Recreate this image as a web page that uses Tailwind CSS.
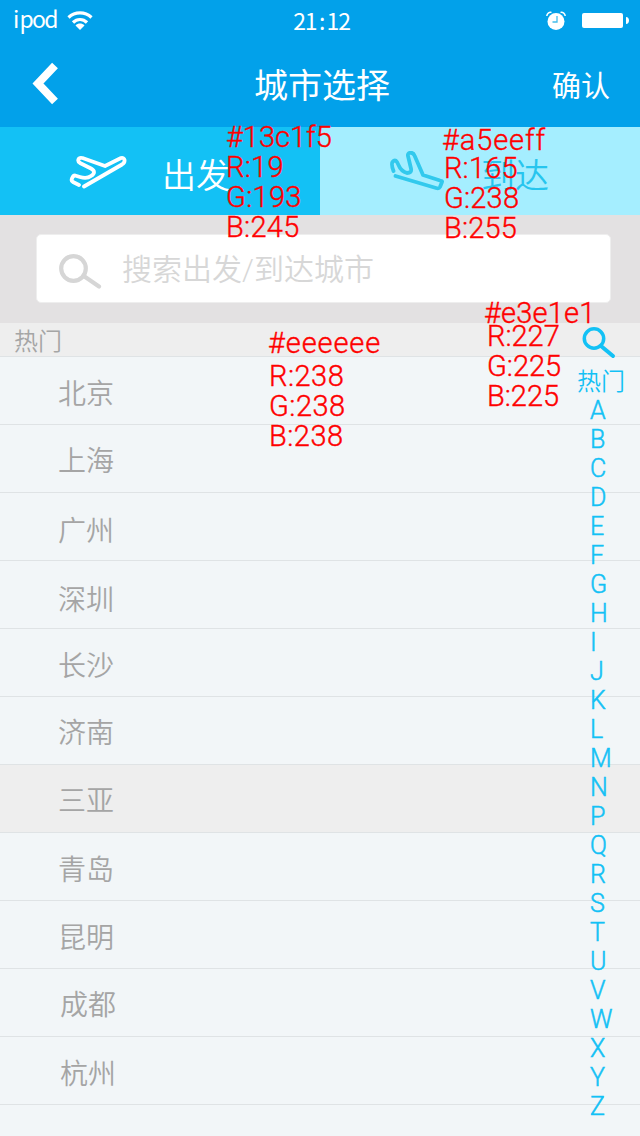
<!DOCTYPE html>
<html lang="zh-CN">
<head>
<meta charset="utf-8">
<title>城市选择</title>
<script src="https://cdn.jsdelivr.net/npm/@tailwindcss/browser@4"></script>
</head>
<body class="relative h-[1136px] w-[640px] overflow-hidden bg-[#f2f6f8] font-['Roboto','Noto_Sans_CJK_SC',sans-serif] font-[350]">

<header class="flex h-[127px] flex-col bg-[#02a1ea] text-white">
  <div class="grid h-10 grid-cols-3 items-center pl-[13px] pr-[11px]">
    <div class="flex items-center gap-[13px]">
      <span class="-mt-1 w-[41px] whitespace-nowrap text-[23px] leading-10 font-normal tracking-[-1.8px] font-['Noto_Sans_CJK_SC',sans-serif]"><span class="mr-0.5">i</span>pod</span>
      <svg class="h-[19px] w-[26px]" viewBox="0 0 26 19" fill="none" stroke="currentColor" stroke-width="3.2"><path d="M1.500 6.500C8 .4 18 .4 24.500 6.500M6 11.500c4-4 10-4 14 0"/><path d="M8.500 14.500c2.500-2.600 6.500-2.600 9 0L13 19z" fill="currentColor" stroke="none"/></svg>
    </div>
    <div class="pl-px text-center text-[23px] font-normal leading-10 tracking-[-1.2px] font-['Noto_Sans_CJK_SC',sans-serif]">21<span class="mx-[2.5px]">:</span>12</div>
    <div class="flex items-center justify-end gap-4">
      <svg class="h-[19px] w-5" viewBox="0 0 20 19" fill="none"><circle cx="10" cy="10.500" r="8.500" fill="#fff"/><path d="M.8 5C1 2.300 3 1 5.500 1.400M19.200 5C19 2.300 17 1 14.500 1.400" stroke="#fff" stroke-width="1.500"/><path d="M11 5v6H6.500" stroke="#44bdeb" stroke-width="1.300"/></svg>
      <svg class="h-[15px] w-[47px]" viewBox="0 0 47 15" fill="#fff"><rect width="41" height="15" rx="2"/><path d="M44 4c4 0 4 7 0 7z"/></svg>
    </div>
  </div>
  <div class="flex h-[87px] items-center justify-between pl-8 pr-[30px] pt-1 font-normal">
    <svg class="-mt-1 h-[43px] w-[27px]" viewBox="0 0 27 43" fill="none" stroke="currentColor" stroke-width="8"><path d="M23 3.500 6 21.500 23 39.500"/></svg>
    <h1 class="ml-[33px] pt-0.5 text-[34px]">城市选择</h1>
    <button class="pt-1 text-[29px] font-normal">确认</button>
  </div>
</header>

<nav class="grid h-[88px] grid-cols-2 text-[34px]">
  <div class="flex items-center gap-[35px] bg-[#13c1f5] pl-[69px] text-white">
    <svg class="h-9 w-[58px]" viewBox="0 0 58 36" fill="none" stroke="currentColor" stroke-width="3.800" stroke-linecap="round" stroke-linejoin="round"><path d="M15 33.500 53 11.500C57 9 56 4 52 5L36 13 13.500 5C9 4 8 8 11 10L22 15.500Q28 19 22 23 18 26 11 24L6 22.500Q4 22.500 3 25.500 2 28 4 29L10 32"/></svg>
    <span class="mt-2.5">出发</span>
  </div>
  <div class="flex items-center gap-[36px] bg-[#a5eeff] pl-[69px] text-[#27c5ee]">
    <svg class="h-10 w-14 shrink-0" viewBox="0 0 56 40" fill="none" stroke="#32c9ed" stroke-width="3.800" stroke-linecap="round" stroke-linejoin="round"><path d="M6.500 25 47 37Q50 38 51 36L53 31Q53.500 30 51 29.500L34 24 25.500 4.500C24 .5 18 1 19 5L22 17.500Q23 22 18 22 12 20 10 15L8 11Q6 8 3.500 11 2 13 4.500 20"/></svg>
    <span class="mt-2.5">到达</span>
  </div>
</nav>

<div class="h-[108px] bg-[#e3e1e2] pl-[36px] pr-[29px] pt-[19px]">
  <div class="flex h-[69px] items-center gap-[19px] rounded-[5px] border border-[#eeeeee] bg-white pl-[21px] text-[30px] text-[#d7d7d7]">
    <svg class="mt-1 h-9 w-[45px]" viewBox="0 0 45 36" fill="none" stroke="#d6d6d6" stroke-width="4.200" stroke-linecap="round"><circle cx="15.500" cy="15.500" r="12.300"/><path d="m26.500 23.500 14.500 10"/></svg>
    <span class="whitespace-nowrap pt-0.5">搜索出发/到达城市</span>
  </div>
</div>

<main class="text-[28px] text-[#a5a5a5]">
  <h2 class="h-[34px] border-b border-[#dfe3e5] bg-[#eeeeee] pl-[14px] pt-0.5 text-2xl leading-[34px] font-[350]">热门</h2>
  <ul class="leading-[68px] [&>li]:h-[68px] [&>li]:border-b [&>li]:border-[#dfe3e5] [&>li]:pl-[58px]">
    <li class="pt-1">北京</li><li class="pt-[3px]">上海</li><li class="pt-[5px]">广州</li><li class="pt-1.5">深圳</li><li class="pt-1">长沙</li><li class="pt-[3px]">济南</li><li class="bg-[#eeeeee] pt-[3px]">三亚</li><li class="pt-1">青岛</li><li class="pt-1">昆明</li><li class="pt-[3px]"><span class="ml-0.5">成都</span></li><li class="pt-1"><span class="ml-0.5">杭州</span></li>
  </ul>
</main>

<!-- Alphabet index over the list -->
<aside class="absolute left-[577px] top-[326px] w-[60px] text-[#13c1f5]">
  <svg class="ml-1 h-[34px] w-9" viewBox="0 0 36 34" fill="none" stroke="currentColor" stroke-width="3.500" stroke-linecap="round"><circle cx="13" cy="12.500" r="9.700"/><path d="m20 20 12 10" stroke-width="4"/></svg>
  <div class="mt-2 h-7 text-2xl leading-[29px]">热门</div>
  <div class="ml-[13px] grid auto-rows-[29px] text-[25px] leading-[29px] [-webkit-text-stroke:0.5px_#13c1f5]">
    <span>A</span><span>B</span><span>C</span><span>D</span><span>E</span><span>F</span><span>G</span><span>H</span><span>I</span><span>J</span><span>K</span><span>L</span><span>M</span><span>N</span><span>P</span><span>Q</span><span>R</span><span>S</span><span>T</span><span>U</span><span>V</span><span>W</span><span>X</span><span>Y</span><span>Z</span>
  </div>
</aside>

<!-- Colour annotations -->
<div class="absolute left-[226px] top-[122px] whitespace-nowrap text-[29px] leading-[30px] text-[#ff0000] [-webkit-text-stroke:0.4px_#ff0000]"><div>#13c1f5</div><div class="tracking-[0.3px]">R:19<br>G:193<br>B:245</div></div>
<div class="absolute left-[442px] top-[125px] whitespace-nowrap text-[29px] leading-[30px] text-[#ff0000] [-webkit-text-stroke:0.4px_#ff0000]"><div class="h-7 tracking-[0.9px]">#a5eeff</div><div class="ml-0.5 tracking-[0.2px]">R:165<br>G:238<br>B:255</div></div>
<div class="absolute left-[268px] top-[328px] whitespace-nowrap text-[29px] leading-[30px] text-[#ff0000] [-webkit-text-stroke:0.4px_#ff0000]"><div class="h-[33px] tracking-[0.9px]">#eeeeee</div><div class="ml-px tracking-[0.5px]">R:238<br>G:238<br>B:238</div></div>
<div class="absolute left-[484px] top-[298px] whitespace-nowrap text-[29px] leading-[30px] text-[#ff0000] [-webkit-text-stroke:0.4px_#ff0000]"><div class="h-[23px] tracking-[0.2px]">#e3e1e1</div><div class="ml-[3px]">R:227<br>G:225<br>B:225</div></div>
</body>
</html>
